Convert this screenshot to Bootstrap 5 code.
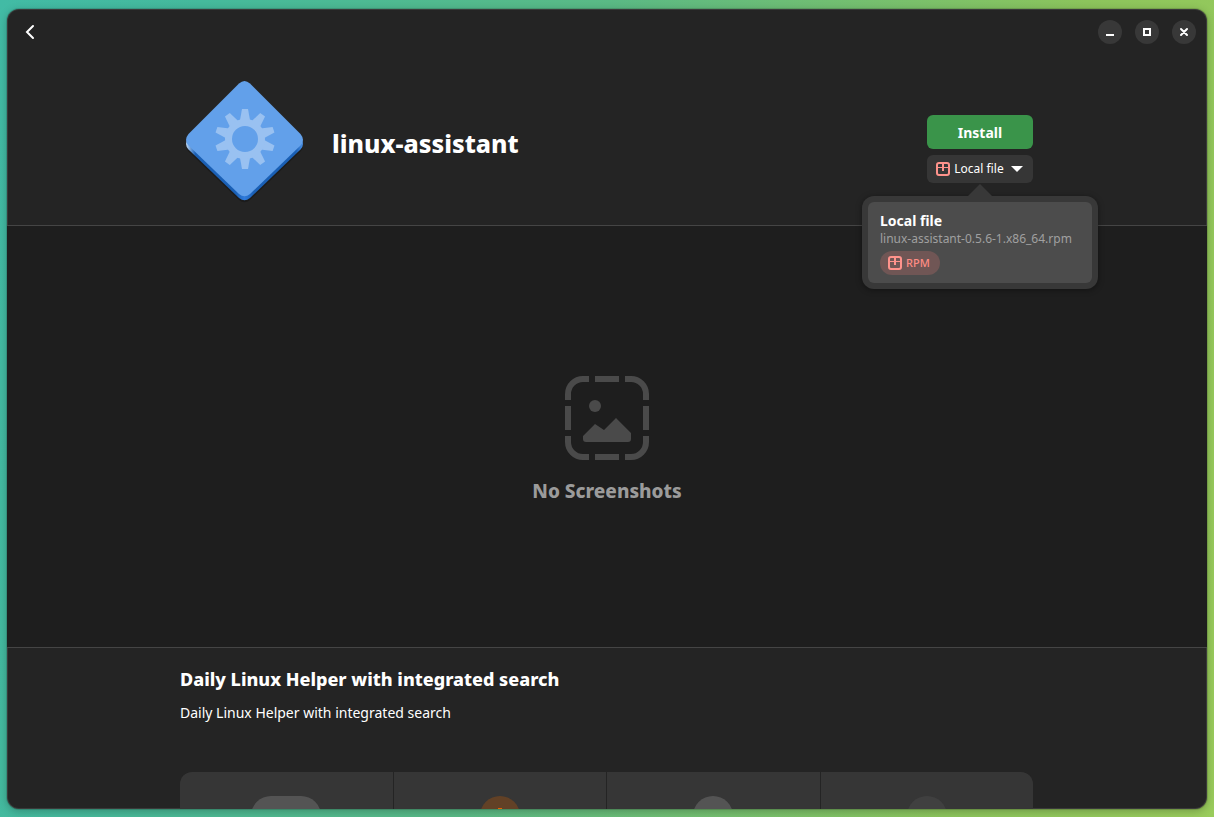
<!DOCTYPE html>
<html lang="en" data-bs-theme="dark">
<head>
<meta charset="utf-8">
<meta name="viewport" content="width=device-width, initial-scale=1">
<title>linux-assistant</title>
<link href="https://cdn.jsdelivr.net/npm/bootstrap@5.3.0/dist/css/bootstrap.min.css" rel="stylesheet">
<style>
  body {
    font-family: "Noto Sans", "Open Sans", sans-serif;
    font-size: 14px;
    line-height: 20px;
    color: #fff;
    padding: 9px 7px 8px;
    background: linear-gradient(100deg, #42bba5 0%, #45b99c 15%, #5ab985 45%, #8cc45c 80%, #9acc5c 100%);
  }
  .app-window {
    background: #242424;
    border-radius: 12px;
    box-shadow: 0 0 0 1px rgba(0,0,0,.12), 0 2px 8px rgba(0,0,0,.25), inset 0 0 0 1px rgba(255,255,255,.1);
  }
  .title-bar { height: 46px; padding: 0 11px; }
  .back-btn { width: 24px; height: 24px; }
  .window-btn { width: 24px; height: 24px; background: #383838; }
  .window-controls { gap: 13px; }
  .page-column { width: 100%; max-width: 854px; margin: 0 auto; padding-right: 1px; }
  .app-header { height: 171px; border-bottom: 1px solid #454545; }
  .app-logo { margin: 21px 24px 0 0; }
  .app-name { font-size: 25px; line-height: 36px; font-weight: 800; margin-top: 27px; }
  .install-column { width: 106px; padding-top: 60px; gap: 6px; }
  .install-btn {
    height: 34px; border-radius: 6px; background: #3a944a; font-size: 14px; font-weight: 700;
    --bs-btn-hover-bg: #43a254; --bs-btn-color: #fff;
  }
  .source-btn { height: 28px; border-radius: 6px; background: #363636; font-size: 12px; --bs-btn-hover-bg: #404040; --bs-btn-color: #fff; }
  .source-btn span { margin: 0 6px 0 4px; }
  .source-menu {
    top: 41px; left: 50%; width: 236px; transform: translateX(-50%);
    padding: 6px; z-index: 5;
    background: #383838; border-radius: 12px; box-shadow: 0 1px 6px rgba(0,0,0,.4);
  }
  .source-menu::before {
    content: ""; position: absolute; top: -12px; left: 50%; margin-left: -12px;
    border: 12px solid transparent; border-top-width: 0; border-bottom-color: #383838;
  }
  .source-item { padding: 9px 12px 8px; background: #4c4c4c; border-radius: 6px; }
  .source-file { font-size: 12px; line-height: 16px; color: #a0a0a0; }
  .format-pill { height: 24px; padding: 0 10px 0 8px; margin-top: 4px; gap: 4px; background: #705655; color: #ff8c84; font-size: 11px; font-weight: 500; }
  .gallery { height: 422px; padding-top: 6px; background: #1e1e1e; border-bottom: 1px solid #454545; }
  .gallery-caption { font-size: 19px; line-height: 26px; font-weight: 800; color: #9b9b9b; margin-top: 18px; }
  .summary { padding: 18px 0 49px; }
  .summary h2 { font-size: 18px; line-height: 26px; font-weight: 800; margin-bottom: 11px; }
  .context-bar { gap: 1px; height: 120px; background: #242424; border-radius: 12px; }
  .context-tile { background: #363636; padding-top: 24px; }
  .context-mark { width: 40px; height: 40px; border-radius: 20px; }
  .context-size { width: 70px; background: #545454; }
  .context-risk { background: #624126; color: #e66100; padding-top: 12px; }
  .context-plain { background: #545454; }
  .context-faint { background: #404040; }
</style>
</head>
<body class="vh-100 overflow-hidden">
<div class="app-window h-100 overflow-hidden d-flex flex-column">
  <div class="title-bar d-flex align-items-center justify-content-between flex-shrink-0">
    <button class="back-btn btn p-0 border-0 d-flex align-items-center justify-content-center" type="button" aria-label="Back">
      <svg width="16" height="16" viewBox="0 0 16 16" fill="none" stroke="#fff" stroke-width="2" stroke-linecap="round"><path d="M11 2 5 8l6 6"/></svg>
    </button>
    <div class="window-controls d-flex">
      <button class="window-btn btn p-0 border-0 rounded-circle d-flex" type="button" aria-label="Minimize">
        <svg width="24" height="24"><path d="M8 14h8v2H8z" fill="#fff"/></svg>
      </button>
      <button class="window-btn btn p-0 border-0 rounded-circle d-flex" type="button" aria-label="Maximize">
        <svg width="24" height="24"><path d="M9 9h6v6H9z" fill="none" stroke="#fff" stroke-width="2"/></svg>
      </button>
      <button class="window-btn btn p-0 border-0 rounded-circle d-flex" type="button" aria-label="Close">
        <svg width="24" height="24"><path d="m9 9 6 6m0-6-6 6" fill="none" stroke="#fff" stroke-width="2" stroke-linecap="round"/></svg>
      </button>
    </div>
  </div>

  <header class="app-header flex-shrink-0">
    <div class="page-column d-flex align-items-start">
      <svg class="app-logo flex-shrink-0" width="128" height="128" viewBox="0 0 128 128" aria-hidden="true">
        <defs>
          <linearGradient id="edge"><stop offset="0" stop-color="#c0d9f5"/><stop offset=".08" stop-color="#1a5fb4"/><stop offset=".42" stop-color="#1a5fb4"/><stop offset=".5" stop-color="#2f7bdc"/><stop offset=".58" stop-color="#1a5fb4"/><stop offset=".94" stop-color="#1a5fb4"/><stop offset="1" stop-color="#4a90e6"/></linearGradient>
          <path id="diamond" d="M59 7.500Q64.500 2.500 70 7.500L120.500 58Q125.500 64 120.500 69.500L70 118Q64.500 122.500 59 118L8.500 69.500Q3.500 64 8.500 58Z"/>
          <path id="tooth" d="M61.500 34.500h6l2.500 14h-11z"/>
        </defs>
        <g transform="translate(0 1)">
          <use href="#diamond" fill="#000" opacity=".25" y="5"/>
          <use href="#diamond" fill="url(#edge)" y="3"/>
          <use href="#diamond" fill="#62a0ea" y="-1"/>
        </g>
        <g fill="#99c1f1" transform="translate(.5 -1.500)">
          <use href="#tooth" transform="rotate(0 64.500 64.500)"/><use href="#tooth" transform="rotate(36 64.500 64.500)"/>
          <use href="#tooth" transform="rotate(72 64.500 64.500)"/><use href="#tooth" transform="rotate(108 64.500 64.500)"/>
          <use href="#tooth" transform="rotate(144 64.500 64.500)"/><use href="#tooth" transform="rotate(180 64.500 64.500)"/>
          <use href="#tooth" transform="rotate(216 64.500 64.500)"/><use href="#tooth" transform="rotate(252 64.500 64.500)"/>
          <use href="#tooth" transform="rotate(288 64.500 64.500)"/><use href="#tooth" transform="rotate(324 64.500 64.500)"/>
          <circle cx="64.500" cy="64.500" r="16.500" fill="none" stroke="#99c1f1" stroke-width="7"/>
        </g>
      </svg>
      <h1 class="app-name align-self-center mb-0 flex-grow-1">linux-assistant</h1>
      <div class="install-column d-flex flex-column flex-shrink-0">
        <button class="install-btn btn p-0 border-0" type="button">Install</button>
        <div class="position-relative">
          <button class="source-btn btn p-0 border-0 w-100 d-flex align-items-center justify-content-center" type="button" aria-expanded="true">
            <svg width="14" height="14" fill="none" stroke="#ff938c" stroke-width="2"><rect x="1" y="1" width="12" height="12" rx="2"/><path d="M2 5.500h10" stroke-width="1"/><path d="M7 2v7"/></svg>
            <span>Local file</span>
            <svg width="14" height="8"><path d="M1 1h12L7 7z" fill="#fff"/></svg>
          </button>
          <div class="source-menu position-absolute">
            <div class="source-item">
              <div class="fw-bold">Local file</div>
              <div class="source-file text-nowrap">linux-assistant-0.5.6-1.x86_64.rpm</div>
              <div class="format-pill rounded-pill d-inline-flex align-items-center align-top">
                <svg width="14" height="14" fill="none" stroke="#ff938c" stroke-width="2"><rect x="1" y="1" width="12" height="12" rx="2"/><path d="M2 5.500h10" stroke-width="1"/><path d="M7 2v7"/></svg>
                <span>RPM</span>
              </div>
            </div>
          </div>
        </div>
      </div>
    </div>
  </header>

  <section class="gallery flex-shrink-0 d-flex flex-column align-items-center justify-content-center">
    <svg width="84" height="84" aria-hidden="true">
      <g fill="none" stroke="#4a4a4a" stroke-width="6">
        <path d="M3 24v-6A15 15 0 0 1 18 3h6M30 3h24M60 3h6a15 15 0 0 1 15 15v6M81 30v24M81 60v6a15 15 0 0 1-15 15h-6M54 81H30M24 81h-6A15 15 0 0 1 3 66v-6M3 54V30"/>
      </g>
      <g fill="#4a4a4a"><circle cx="30" cy="30" r="6"/><path d="M18 60 30 48l9 6 12-12 15 15v6q0 3-3 3H21q-3 0-3-3z"/></g>
    </svg>
    <div class="gallery-caption">No Screenshots</div>
  </section>

  <main class="page-column flex-shrink-0">
    <div class="summary">
      <h2>Daily Linux Helper with integrated search</h2>
      <p class="mb-0">Daily Linux Helper with integrated search</p>
    </div>
    <div class="context-bar d-flex overflow-hidden">
      <div class="context-tile flex-fill w-25"><div class="context-mark context-size mx-auto"></div></div>
      <div class="context-tile flex-fill w-25"><div class="context-mark context-risk mx-auto d-flex justify-content-center"><svg width="4" height="16"><path d="M0 0h4v10H0zM0 12h4v4H0z" fill="currentColor"/></svg></div></div>
      <div class="context-tile flex-fill w-25"><div class="context-mark context-plain mx-auto"></div></div>
      <div class="context-tile flex-fill w-25"><div class="context-mark context-faint mx-auto"></div></div>
    </div>
  </main>
</div>
<script src="https://cdn.jsdelivr.net/npm/bootstrap@5.3.0/dist/js/bootstrap.bundle.min.js"></script>
</body>
</html>
